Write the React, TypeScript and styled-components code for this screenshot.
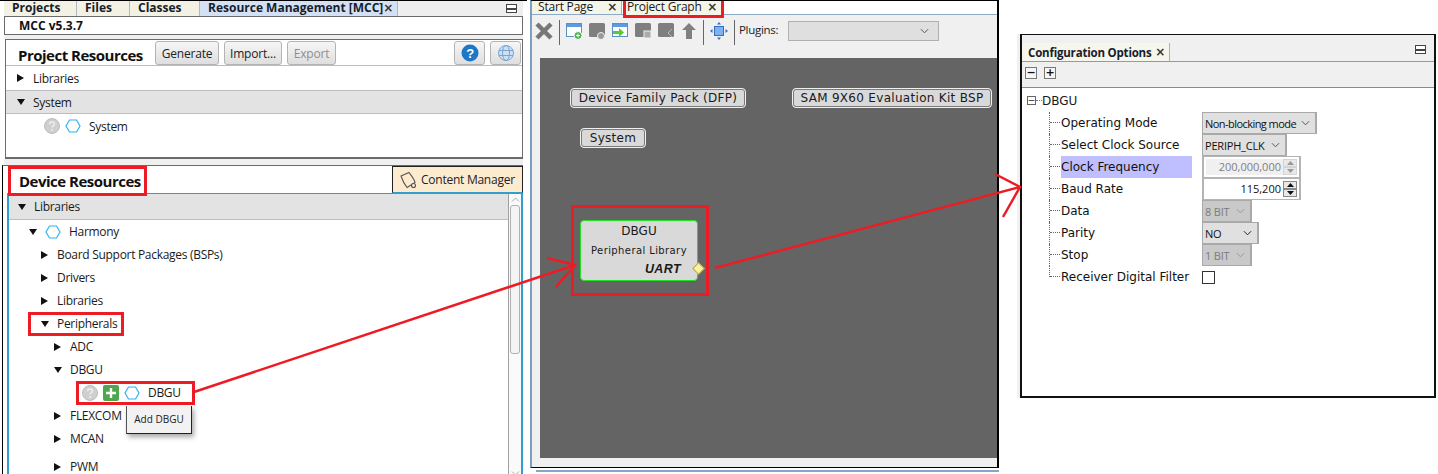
import { ReactNode } from "react"
import styled, { createGlobalStyle } from "styled-components"

const RED = "#ed1c24"

const GlobalStyle = createGlobalStyle`
  html, body {
    margin: 0;
    padding: 0;
    background: #ffffff;
  }
  * {
    box-sizing: border-box;
  }
`

const Page = styled.div`
  position: relative;
  display: flex;
  width: 1438px;
  height: 474px;
  overflow: hidden;
  background: #ffffff;
  font-family: "Open Sans", "Noto Sans", sans-serif;
  font-size: 12px;
  color: #1a1a1a;
`

/* ---------- left pane ---------- */

const LeftPane = styled.section`
  display: flex;
  flex-direction: column;
  flex: 0 0 527px;
  height: 468px;
  padding: 0 4px;
  border-top: 1px solid #000;
`

const TabStrip = styled.div`
  display: flex;
  flex: 0 0 15px;
  align-items: stretch;
  background: #eeeeee;
`

const LeftTab = styled.div<{ $w: number; $active?: boolean }>`
  display: flex;
  flex: 0 0 ${(p) => p.$w}px;
  align-items: center;
  padding: 0 0 2px 8px;
  border-right: 1px solid #aeb9c6;
  background: ${(p) => (p.$active ? "#d4e0f4" : "#f3f1e4")};
  font-weight: 700;
  font-size: 12px;
  line-height: 12px;
  white-space: nowrap;
  color: #16202c;
`

const TabClose = styled.span`
  margin-left: auto;
  margin-right: 4px;
  font-family: "DejaVu Sans", sans-serif;
  font-size: 12px;
  font-weight: 700;
  line-height: 12px;
  color: #333;
`

const MinimizeBtn = styled.span`
  width: 11px;
  height: 9px;
  margin: 3px 6px 0 auto;
  border: 1px solid #444;
  background: linear-gradient(#fff 50%, #444 50%, #444 70%, #fff 70%);
`

const McBar = styled.div`
  display: flex;
  flex: 0 0 19px;
  align-items: center;
  padding-left: 14px;
  border: 1px solid #6b6b6b;
  font-weight: 700;
  font-size: 12px;
  color: #111;
`

const Splitter = styled.div<{ $h: number }>`
  flex: 0 0 ${(p) => p.$h}px;
  background: #efefef;
`

const ProjectBox = styled.div`
  display: flex;
  flex-direction: column;
  flex: 0 0 120px;
  margin-left: 1px;
  background: #fff;
  border: 1px solid #6b6b6b;
  border-bottom-width: 2px;
`

const ProjectHeader = styled.header`
  display: flex;
  flex: 0 0 26px;
  align-items: flex-start;
  padding: 1px 1px 0 12px;
  border-bottom: 1px solid #bcbcbc;
`

const PanelTitle = styled.h2<{ $w: number }>`
  flex: 0 0 ${(p) => p.$w}px;
  margin: 5px 0 0;
  font-size: 15px;
  font-weight: 700;
  line-height: 18px;
  letter-spacing: -0.5px;
  white-space: nowrap;
  color: #111;
`

const ToolButton = styled.button<{ $w: number; $off?: boolean; $last?: boolean }>`
  display: flex;
  flex: 0 0 ${(p) => p.$w}px;
  align-items: center;
  justify-content: center;
  height: 24px;
  margin-right: ${(p) => (p.$last ? 0 : 5)}px;
  padding: 0;
  border: 1px solid #b4b4b4;
  border-radius: 3px;
  background: linear-gradient(#f6f6f6, #dedede);
  font-family: inherit;
  font-size: 12px;
  letter-spacing: -0.2px;
  color: ${(p) => (p.$off ? "#8f8f8f" : "#222")};
`

const HeaderSpacer = styled.span`
  flex: 1;
`

const SectionRow = styled.div<{ $shade?: boolean }>`
  display: flex;
  flex: 0 0 24px;
  align-items: center;
  padding-left: 11px;
  background: ${(p) => (p.$shade ? "#e3e3e3" : "#fff")};
  border-bottom: ${(p) => (p.$shade ? "1px solid #bdbdbd" : "0")};
  border-top: ${(p) => (p.$shade ? "1px solid #bdbdbd" : "0")};
`

const Tri = styled.span<{ $open?: boolean }>`
  flex: 0 0 7px;
  width: 0;
  height: 0;
  margin-right: 9px;
  border-style: solid;
  ${(p) =>
    p.$open
      ? `border-width: 6px 4px 0 4px; border-color: #111 transparent transparent transparent; flex-basis: 8px; margin-right: 8px;`
      : `border-width: 4px 0 4px 7px; border-color: transparent transparent transparent #111;`}
`

const IconRow = styled.div`
  display: flex;
  align-items: center;
  gap: 5px;
  height: 24px;
  padding-left: 38px;
`

const RowText = styled.span<{ $lead?: number }>`
  margin-left: ${(p) => p.$lead ?? 0}px;
  white-space: nowrap;
  font-size: 12px;
  letter-spacing: -0.3px;
`

const DeviceBox = styled.div`
  display: flex;
  flex-direction: column;
  flex: 0 0 303px;
  margin-left: -2px;
  padding-left: 4px;
  border-left: 1px solid #000;
  border-top: 1px solid #6b6b6b;
  border-bottom: 1px solid #000;
`

const DeviceHeader = styled.header`
  display: flex;
  flex: 0 0 27px;
  min-height: 0;
  height: 27px;
  align-items: flex-start;
  padding-left: 1px;
`

const TitleMark = styled.h2`
  position: relative;
  z-index: 2;
  display: flex;
  align-items: center;
  flex: 0 0 139px;
  height: 30px;
  margin: 0;
  padding-left: 8px;
  border: 3px solid ${RED};
  background: #fff;
  font-size: 15px;
  font-weight: 700;
  letter-spacing: -0.5px;
  white-space: nowrap;
  color: #111;
`

const ContentManager = styled.button`
  display: flex;
  align-items: center;
  gap: 3px;
  flex: 0 0 131px;
  height: 27px;
  margin-left: auto;
  padding: 0 0 0 7px;
  border: 1px solid #222;
  border-bottom-color: #2f9fd0;
  background: #fdebd0;
  font-family: inherit;
  font-size: 12px;
  letter-spacing: -0.25px;
  white-space: nowrap;
  color: #222;
`

const TreeFrame = styled.div`
  display: flex;
  flex: 1;
  min-height: 0;
  border: 2px solid #2f9fd0;
  border-top-width: 1px;
`

const TreeBody = styled.div`
  flex: 1;
  min-width: 0;
  overflow: hidden;
`

const TreeHead = styled.div`
  display: flex;
  align-items: center;
  height: 26px;
  padding-left: 9px;
  background: #e3e3e3;
  border-bottom: 1px solid #bdbdbd;
`

const TreeRow = styled.div<{ $indent: number; $gap?: number }>`
  display: flex;
  align-items: center;
  height: 23px;
  margin-top: ${(p) => p.$gap ?? 0}px;
  padding-left: ${(p) => p.$indent}px;
`

const Marked = styled.div<{ $w: number; $pad: number }>`
  position: relative;
  display: flex;
  align-items: center;
  gap: 5px;
  width: ${(p) => p.$w}px;
  height: 18px;
  padding-left: ${(p) => p.$pad}px;
  outline: 3px solid ${RED};
`

const Tooltip = styled.div`
  position: absolute;
  left: 47px;
  top: 22px;
  z-index: 3;
  display: flex;
  align-items: center;
  justify-content: center;
  width: 66px;
  height: 28px;
  background: #f2f2f2;
  border-right: 1px solid #222;
  border-bottom: 1px solid #222;
  border-left: 1px solid #555;
  box-shadow: 2px 3px 5px rgba(0, 0, 0, 0.35);
  font-size: 10px;
  white-space: nowrap;
`

const ScrollTrack = styled.div`
  display: flex;
  flex-direction: column;
  align-items: center;
  flex: 0 0 13px;
  padding-top: 3px;
  border-left: 1px solid #a0a0a0;
  background: #fafafa;
`

const ScrollThumb = styled.div`
  width: 10px;
  height: 149px;
  margin-top: 3px;
  border: 1px solid #b0b0b0;
  border-radius: 3px;
  background: #f4f4f4;
`

const ScrollArrow = styled.svg<{ $bottom?: boolean }>`
  margin-top: ${(p) => (p.$bottom ? "auto" : "0")};
  margin-bottom: ${(p) => (p.$bottom ? "2px" : "0")};
`

/* ---------- middle pane ---------- */

const MiddleColumn = styled.section`
  display: flex;
  flex-direction: column;
  flex: 0 0 472px;
  padding-left: 3px;
`

const GraphFrame = styled.div`
  display: flex;
  flex-direction: column;
  height: 468px;
  background: #f0f0f0;
  border-top: 1px solid #000;
  border-right: 2px solid #000;
  border-bottom: 1px solid #000;
  border-left: 2px solid #7f9fc0;
`

const GraphTabs = styled.div`
  display: flex;
  flex: 0 0 14px;
  height: 14px;
  min-height: 0;
  align-items: flex-start;
  background: #fff;
  border-bottom: 1px solid #8ea9c6;
`

const GraphTab = styled.div<{ $w: number; $marked?: boolean }>`
  position: relative;
  z-index: 1;
  display: flex;
  flex: 0 0 ${(p) => p.$w}px;
  align-items: center;
  height: ${(p) => (p.$marked ? "17px" : "13px")};
  margin-left: ${(p) => (p.$marked ? "1px" : "0")};
  padding-left: ${(p) => (p.$marked ? "1px" : "6px")};
  padding-bottom: ${(p) => (p.$marked ? "3px" : "1px")};
  background: #f5f4e8;
  border-style: solid;
  border-width: ${(p) => (p.$marked ? "0 3px 3px 3px" : "0 1px 0 0")};
  border-color: ${(p) => (p.$marked ? RED : "#9fb4ca")};
  font-size: 12px;
  letter-spacing: -0.2px;
  line-height: 12px;
`

const GraphToolbar = styled.div`
  display: flex;
  flex: 0 0 43px;
  align-items: flex-start;
  padding: 6px 0 0 3px;
`

const ToolIcon = styled.svg<{ $after?: number }>`
  flex: none;
  margin-top: 1px;
  margin-right: ${(p) => p.$after ?? 7}px;
`

const ToolSep = styled.span<{ $after?: number }>`
  flex: 0 0 1px;
  height: 25px;
  margin: -1px ${(p) => p.$after ?? 6}px 0 0;
  background: #666;
`

const PluginLabel = styled.span`
  margin: 1px 10px 0 0;
  font-size: 11.5px;
  letter-spacing: -0.3px;
  color: #222;
`

const PluginSelect = styled.div`
  display: flex;
  align-items: center;
  justify-content: flex-end;
  width: 151px;
  height: 20px;
  padding-right: 9px;
  background: #dfdfdf;
  border: 1px solid #b0b0b0;
`

const Canvas = styled.div`
  position: relative;
  flex: 0 0 400px;
  margin-left: 8px;
  background: #646464;
`

const Chip = styled.div<{ $x: number; $y: number; $w: number }>`
  position: absolute;
  left: ${(p) => p.$x}px;
  top: ${(p) => p.$y}px;
  display: flex;
  align-items: center;
  justify-content: center;
  width: ${(p) => p.$w}px;
  height: 20px;
  background: #d9d9d9;
  border: 1px solid #f0f0f0;
  outline: 1px solid #7a7a7a;
  outline-offset: -2px;
  border-radius: 4px;
  font-family: "DejaVu Sans", sans-serif;
  font-size: 12px;
  letter-spacing: 0.3px;
  color: #1a1a1a;
  white-space: nowrap;
`

const NodeMark = styled.div`
  position: absolute;
  left: 31px;
  top: 147px;
  width: 138px;
  height: 91px;
  border: 3px solid ${RED};
`

const NodeCard = styled.div`
  position: absolute;
  left: 6px;
  top: 12px;
  display: flex;
  flex-direction: column;
  align-items: center;
  width: 118px;
  height: 61px;
  padding-top: 2px;
  background: #d9d9d9;
  border: 1px solid #22e022;
  border-radius: 4px;
  font-family: "DejaVu Sans", sans-serif;
  color: #1a1a1a;
`

const NodeName = styled.span`
  font-size: 12px;
  line-height: 16px;
`

const NodeKind = styled.span`
  margin-top: 5px;
  font-size: 10px;
  line-height: 14px;
  letter-spacing: 0.4px;
`

const NodePort = styled.span`
  align-self: flex-end;
  margin: 4px 16px 0 0;
  font-family: "Liberation Sans", sans-serif;
  font-size: 12.5px;
  font-style: italic;
  font-weight: 700;
  line-height: 15px;
  letter-spacing: 0.4px;
`

const NodeDiamond = styled.span`
  position: absolute;
  right: -6px;
  bottom: 7px;
  width: 9px;
  height: 9px;
  background: #fdf29a;
  border: 1px solid #a8a36a;
  transform: rotate(45deg);
`

const BottomRule = styled.div`
  height: 2px;
  margin: 2px 0 0 6px;
  background: #86a8c8;
`

/* ---------- configuration window ---------- */

const ConfigWindow = styled.section`
  display: flex;
  flex-direction: column;
  flex: 0 0 416px;
  height: 364px;
  margin: 34px 0 0 21px;
  border: 2px solid #111;
  border-top-width: 1px;
  background: #fff;
  box-shadow: -3px 0 0 #f0f0f0;
`

const ConfigTabs = styled.div`
  display: flex;
  flex: 0 0 27px;
  align-items: flex-end;
  background: #f0f0f0;
  border-bottom: 1px solid #7f9fc0;
`

const ConfigTab = styled.div`
  display: flex;
  align-items: center;
  width: 148px;
  height: 18px;
  padding-left: 6px;
  background: #f6f6ec;
  border-right: 1px solid #9fb4ca;
  font-size: 11.5px;
  font-weight: 700;
  letter-spacing: -0.2px;
  white-space: nowrap;
  color: #16202c;
`

const ConfigMinimize = styled(MinimizeBtn)`
  align-self: center;
  margin: 2px 8px 0 auto;
`

const ConfigToolbar = styled.div`
  display: flex;
  flex: 0 0 26px;
  align-items: center;
  gap: 7px;
  padding: 0 0 3px 3px;
  background: #f0f0f0;
  border-bottom: 1px solid #8a8a8a;
`

const SquareBtn = styled.span`
  display: flex;
  align-items: center;
  justify-content: center;
  width: 12px;
  height: 12px;
  border: 1px solid #777;
  background: #f6f6f6;
  font-family: "DejaVu Sans", sans-serif;
  font-weight: 700;
  font-size: 11px;
  line-height: 10px;
  color: #111;
`

const ConfigTree = styled.div`
  display: flex;
  flex-direction: column;
  padding: 1px 0 0 5px;
`

const RootRow = styled.div`
  display: flex;
  align-items: center;
  height: 23px;
  font-family: "DejaVu Sans", sans-serif;
  font-size: 12px;
`

const ExpandBox = styled.span`
  display: flex;
  align-items: center;
  justify-content: center;
  width: 9px;
  height: 9px;
  border: 1px solid #666;
  font-size: 9px;
  line-height: 7px;
`

const RootDots = styled.span`
  width: 6px;
  border-top: 1px dotted #777;
`

const OptionRow = styled.div`
  display: flex;
  align-items: center;
  height: 22px;
  padding-left: 22px;
  font-family: "DejaVu Sans", sans-serif;
  font-size: 12px;
`

const Branch = styled.span<{ $last?: boolean }>`
  position: relative;
  align-self: flex-start;
  flex: 0 0 12px;
  height: ${(p) => (p.$last ? "11px" : "22px")};
  border-left: 1px dotted #666;

  &::after {
    content: "";
    position: absolute;
    left: 0;
    top: 10px;
    width: 10px;
    border-top: 1px dotted #666;
  }
`

const OptionLabel = styled.span<{ $hot?: boolean }>`
  display: flex;
  align-items: center;
  flex: 0 0 131px;
  height: 22px;
  margin-right: 10px;
  white-space: nowrap;
  background: ${(p) => (p.$hot ? "#bfbfff" : "transparent")};
  color: #111;
`

const Dropdown = styled.span<{ $w: number; $off?: boolean; $tight?: boolean }>`
  display: flex;
  align-items: center;
  justify-content: space-between;
  width: ${(p) => p.$w}px;
  height: 22px;
  padding: 0 5px 0 2px;
  background: ${(p) => (p.$off ? "#c9c9c9" : "#e0e0e0")};
  border-style: solid;
  border-color: #a9a9a9;
  border-width: 1px 2px 1px 1px;
  font-family: "Open Sans", sans-serif;
  font-size: 11px;
  letter-spacing: ${(p) => (p.$tight ? "-0.55px" : "-0.2px")};
  white-space: nowrap;
  color: ${(p) => (p.$off ? "#7c7c7c" : "#111")};
`

const Spinner = styled.span<{ $off?: boolean }>`
  display: flex;
  align-items: stretch;
  width: 99px;
  height: 22px;
  padding: 2px;
  background: #fff;
  border-style: solid;
  border-color: #b4b4b4;
  border-width: 1px 2px;
  font-family: "Open Sans", sans-serif;
  font-size: 11px;
  color: ${(p) => (p.$off ? "#808080" : "#111")};
`

const SpinValue = styled.span<{ $off?: boolean }>`
  flex: 1;
  line-height: 16px;
  text-align: right;
  padding-right: 2px;
  background: ${(p) => (p.$off ? "#f0f0f0" : "#fff")};
`

const SpinButtons = styled.span`
  display: flex;
  flex-direction: column;
  justify-content: center;
  flex: 0 0 14px;
`

const SpinCell = styled.span<{ $off?: boolean }>`
  display: flex;
  align-items: center;
  justify-content: center;
  height: 8px;
  background: #e8e8e8;
  border: 1px solid ${(p) => (p.$off ? "#d4d4d4" : "#888")};
`

const CheckSquare = styled.span`
  width: 13px;
  height: 13px;
  border: 1px solid #333;
  background: #fff;
`

const Annotations = styled.svg`
  position: absolute;
  left: 0;
  top: 0;
  z-index: 5;
  pointer-events: none;
`

/* ---------- drawings ---------- */

function Hex() {
  return (
    <svg width="16" height="14" viewBox="0 0 16 14" fill="none">
      <path d="M4.500 1h7L15 7l-3.500 6h-7L1 7z" stroke="#2fb2f2" strokeWidth="1.200" />
    </svg>
  )
}

function HelpDisc() {
  return (
    <svg width="16" height="16" viewBox="0 0 16 16">
      <circle cx="8" cy="8" r="7.500" fill="#cfcfcf" stroke="#bdbdbd" />
      <path d="M5.600 6.200c0-3 4.900-3 4.900-.2 0 1.800-2.500 1.900-2.500 3.600" fill="none" stroke="#eee" strokeWidth="1.600" />
      <circle cx="8" cy="12" r="1" fill="#eee" />
    </svg>
  )
}

function PlusTile() {
  return (
    <svg width="16" height="16" viewBox="0 0 16 16">
      <rect width="16" height="16" rx="2" fill="#4ea64e" />
      <path d="M8 3v10M3 8h10" stroke="#fff" strokeWidth="2.400" />
    </svg>
  )
}

function Chevron({ color = "#555" }: { color?: string }) {
  return (
    <svg width="9" height="6" viewBox="0 0 10 6" fill="none">
      <path d="M1 1l4 4 4-4" stroke={color} strokeWidth="1.100" />
    </svg>
  )
}

function SpinGlyph({ up, off }: { up?: boolean; off?: boolean }) {
  return (
    <SpinCell $off={off}>
      <svg width="7" height="4" viewBox="0 0 7 4">
        <path d={up ? "M3.500 0L7 4H0z" : "M0 0h7L3.500 4z"} fill={off ? "#999" : "#111"} />
      </svg>
    </SpinCell>
  )
}

function Window({ on, children }: { on?: boolean; children?: ReactNode }) {
  return (
    <ToolIcon width="16" height="18" viewBox="0 0 16 18">
      {on ? (
        <>
          <rect x="0.500" y="1.500" width="15" height="13" fill="#fff" stroke="#5b8fc8" />
          <rect x="1" y="2" width="14" height="3" fill="#5b9be0" />
        </>
      ) : (
        <rect x="0" y="1" width="16" height="14" rx="1.500" fill="#7f7f7f" />
      )}
      {children}
    </ToolIcon>
  )
}

function Tree({ open, children }: { open?: boolean; children: ReactNode }) {
  return (
    <>
      <Tri $open={open} />
      <RowText>{children}</RowText>
    </>
  )
}

export default function App() {
  return (
    <Page>
      <GlobalStyle />

      <LeftPane>
        <TabStrip>
          <LeftTab $w={73}>Projects</LeftTab>
          <LeftTab $w={53}>Files</LeftTab>
          <LeftTab $w={70}>Classes</LeftTab>
          <LeftTab $w={196} $active>
            Resource Management [MCC]
            <TabClose>×</TabClose>
          </LeftTab>
          <MinimizeBtn />
        </TabStrip>
        <McBar>MCC v5.3.7</McBar>
        <Splitter $h={4} />
        <ProjectBox>
          <ProjectHeader>
            <PanelTitle $w={137}>Project Resources</PanelTitle>
            <ToolButton $w={64}>Generate</ToolButton>
            <ToolButton $w={58}>Import...</ToolButton>
            <ToolButton $w={49} $off>Export</ToolButton>
            <HeaderSpacer />
            <ToolButton $w={31}>
              <svg width="18" height="18" viewBox="0 0 18 18">
                <circle cx="9" cy="9" r="8.500" fill="#1f76c4" />
                <text x="9" y="13.500" textAnchor="middle" fontSize="13" fontWeight="700" fill="#fff" fontFamily="Liberation Sans">?</text>
              </svg>
            </ToolButton>
            <ToolButton $w={31} $last>
              <svg width="18" height="18" viewBox="0 0 18 18" fill="#cfe0f2" stroke="#7aa5d2">
                <circle cx="9" cy="9" r="7.500" />
                <ellipse cx="9" cy="9" rx="3.500" ry="7.500" fill="none" />
                <path d="M2 6.500h14M2 11.500h14" fill="none" />
              </svg>
            </ToolButton>
          </ProjectHeader>
          <SectionRow>
            <Tree>Libraries</Tree>
          </SectionRow>
          <SectionRow $shade>
            <Tree open>System</Tree>
          </SectionRow>
          <IconRow>
            <HelpDisc />
            <Hex />
            <RowText $lead={3}>System</RowText>
          </IconRow>
        </ProjectBox>
        <Splitter $h={6} />
        <DeviceBox>
          <DeviceHeader>
            <TitleMark>Device Resources</TitleMark>
            <ContentManager>
              <svg width="18" height="18" viewBox="0 0 18 18" fill="none" stroke="#555" strokeWidth="1.100">
                <path d="M1 5l8-3.500c2 2.500 5 6 6 10l-8 5C5 14 2 8 1 5z" />
                <circle cx="13.500" cy="14.500" r="2" fill="#fdebd0" />
              </svg>
              Content Manager
            </ContentManager>
          </DeviceHeader>
          <TreeFrame>
            <TreeBody>
              <TreeHead>
                <Tree open>Libraries</Tree>
              </TreeHead>
              <TreeRow $indent={20}>
                <Tri $open />
                <Hex />
                <RowText $lead={8}>Harmony</RowText>
              </TreeRow>
              <TreeRow $indent={32}>
                <Tree>Board Support Packages (BSPs)</Tree>
              </TreeRow>
              <TreeRow $indent={32}>
                <Tree>Drivers</Tree>
              </TreeRow>
              <TreeRow $indent={32}>
                <Tree>Libraries</Tree>
              </TreeRow>
              <TreeRow $indent={22}>
                <Marked $w={90} $pad={10}>
                  <Tri $open />
                  <RowText $lead={-5}>Peripherals</RowText>
                </Marked>
              </TreeRow>
              <TreeRow $indent={45}>
                <Tree>ADC</Tree>
              </TreeRow>
              <TreeRow $indent={45}>
                <Tree open>DBGU</Tree>
              </TreeRow>
              <TreeRow $indent={70}>
                <Marked $w={113} $pad={3}>
                  <HelpDisc />
                  <PlusTile />
                  <Hex />
                  <RowText $lead={3}>DBGU</RowText>
                  <Tooltip>Add DBGU</Tooltip>
                </Marked>
              </TreeRow>
              <TreeRow $indent={45}>
                <Tree>FLEXCOM</Tree>
              </TreeRow>
              <TreeRow $indent={45}>
                <Tree>MCAN</Tree>
              </TreeRow>
              <TreeRow $indent={45} $gap={5}>
                <Tree>PWM</Tree>
              </TreeRow>
            </TreeBody>
            <ScrollTrack>
              <ScrollArrow width="9" height="5" viewBox="0 0 9 5" fill="none">
                <path d="M1 4.500l3.500-3.500 3.500 3.500" stroke="#aaa" />
              </ScrollArrow>
              <ScrollThumb />
              <ScrollArrow $bottom width="9" height="5" viewBox="0 0 9 5" fill="none">
                <path d="M1 .5l3.500 3.500 3.500-3.500" stroke="#aaa" />
              </ScrollArrow>
            </ScrollTrack>
          </TreeFrame>
        </DeviceBox>
      </LeftPane>

      <MiddleColumn>
        <GraphFrame>
          <GraphTabs>
            <GraphTab $w={90}>
              Start Page
              <TabClose>×</TabClose>
            </GraphTab>
            <GraphTab $w={101} $marked>
              Project Graph
              <TabClose>×</TabClose>
            </GraphTab>
          </GraphTabs>
          <GraphToolbar>
            <ToolIcon $after={6} width="18" height="18" viewBox="0 0 18 18">
              <path d="M2 2l14 14M16 2L2 16" stroke="#777" strokeWidth="4.500" />
            </ToolIcon>
            <ToolSep />
            <Window on>
              <circle cx="12" cy="13.500" r="4" fill="#4caf50" stroke="#fff" />
              <path d="M10 13.500h4M12 11.500v4" stroke="#fff" />
            </Window>
            <Window>
              <circle cx="12" cy="14" r="3.500" fill="#999" stroke="#f0f0f0" />
            </Window>
            <Window on>
              <path d="M1 9h6V6l5 4.500L7 15v-3H1z" fill="#55cc33" />
            </Window>
            <Window>
              <rect x="9" y="9" width="7" height="7" fill="#aaa" stroke="#f0f0f0" />
            </Window>
            <Window>
              <path d="M14 7l-4 4 4 4" fill="none" stroke="#bbb" />
            </Window>
            <ToolIcon $after={6} width="16" height="18" viewBox="0 0 16 18">
              <path d="M8 1l7 7h-4v9H5V8H1z" fill="#808080" />
            </ToolIcon>
            <ToolSep />
            <ToolIcon $after={6} width="18" height="18" viewBox="0 0 18 18">
              <rect x="4.500" y="4.500" width="9" height="9" fill="#7fb0f0" stroke="#2f6fc0" />
              <path d="M9 0l2 2.500H7zM9 18l2-2.500H7zM0 9l2.500-2v4zM18 9l-2.500-2v4z" fill="#2f6fc0" />
            </ToolIcon>
            <ToolSep $after={4} />
            <PluginLabel>Plugins:</PluginLabel>
            <PluginSelect>
              <Chevron />
            </PluginSelect>
          </GraphToolbar>
          <Canvas>
            <Chip $x={30} $y={30} $w={176}>Device Family Pack (DFP)</Chip>
            <Chip $x={252} $y={30} $w={200}>SAM 9X60 Evaluation Kit BSP</Chip>
            <Chip $x={40} $y={70} $w={66}>System</Chip>
            <NodeMark>
              <NodeCard>
                <NodeName>DBGU</NodeName>
                <NodeKind>Peripheral Library</NodeKind>
                <NodePort>UART</NodePort>
                <NodeDiamond />
              </NodeCard>
            </NodeMark>
          </Canvas>
        </GraphFrame>
        <BottomRule />
      </MiddleColumn>

      <ConfigWindow>
        <ConfigTabs>
          <ConfigTab>
            Configuration Options
            <TabClose>×</TabClose>
          </ConfigTab>
          <ConfigMinimize />
        </ConfigTabs>
        <ConfigToolbar>
          <SquareBtn>−</SquareBtn>
          <SquareBtn>+</SquareBtn>
        </ConfigToolbar>
        <ConfigTree>
          <RootRow>
            <ExpandBox>−</ExpandBox>
            <RootDots />
            DBGU
          </RootRow>
          <OptionRow>
            <Branch />
            <OptionLabel>Operating Mode</OptionLabel>
            <Dropdown $w={115} $tight>Non-blocking mode <Chevron /></Dropdown>
          </OptionRow>
          <OptionRow>
            <Branch />
            <OptionLabel>Select Clock Source</OptionLabel>
            <Dropdown $w={85}>PERIPH_CLK <Chevron /></Dropdown>
          </OptionRow>
          <OptionRow>
            <Branch />
            <OptionLabel $hot>Clock Frequency</OptionLabel>
            <Spinner $off>
              <SpinValue $off>200,000,000</SpinValue>
              <SpinButtons>
                <SpinGlyph up off />
                <SpinGlyph off />
              </SpinButtons>
            </Spinner>
          </OptionRow>
          <OptionRow>
            <Branch />
            <OptionLabel>Baud Rate</OptionLabel>
            <Spinner>
              <SpinValue>115,200</SpinValue>
              <SpinButtons>
                <SpinGlyph up />
                <SpinGlyph />
              </SpinButtons>
            </Spinner>
          </OptionRow>
          <OptionRow>
            <Branch />
            <OptionLabel>Data</OptionLabel>
            <Dropdown $w={50} $off>8 BIT <Chevron color="#999" /></Dropdown>
          </OptionRow>
          <OptionRow>
            <Branch />
            <OptionLabel>Parity</OptionLabel>
            <Dropdown $w={57}>NO <Chevron color="#222" /></Dropdown>
          </OptionRow>
          <OptionRow>
            <Branch />
            <OptionLabel>Stop</OptionLabel>
            <Dropdown $w={50} $off>1 BIT <Chevron color="#999" /></Dropdown>
          </OptionRow>
          <OptionRow>
            <Branch $last />
            <OptionLabel>Receiver Digital Filter</OptionLabel>
            <CheckSquare />
          </OptionRow>
        </ConfigTree>
      </ConfigWindow>

      <Annotations width="1438" height="474" fill="none" stroke={RED} strokeWidth="2.500">
        <path d="M194 392L575 265M547 258L575 265L556 287" />
        <path d="M715 268L1020 187M995 174L1020 187L1003 217" />
      </Annotations>
    </Page>
  )
}
